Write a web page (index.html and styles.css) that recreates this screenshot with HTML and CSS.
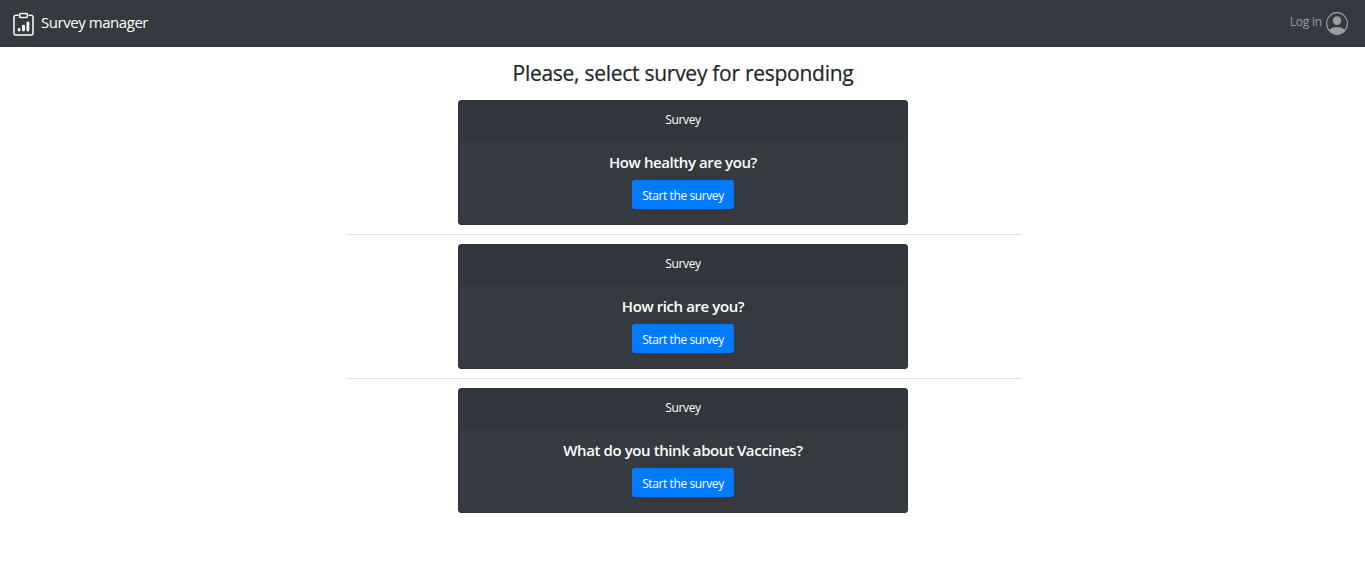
FILE: index.html
```html
<!DOCTYPE html>
<html lang="en">
<head>
<meta charset="utf-8">
<title>Survey manager</title>
<link rel="stylesheet" href="styles.css">
</head>
<body>
<nav class="navbar">
  <a class="brand">
    <svg class="brand-icon" width="21" height="24" viewBox="0 0 21 24" fill="none" stroke="#fff" stroke-width="1.5">
      <path d="M5.500 3.200H3A2 2 0 0 0 1 5.200V21A2 2 0 0 0 3 23H18A2 2 0 0 0 20 21V5.200A2 2 0 0 0 18 3.200H15.500"/>
      <rect x="6.500" y="1.500" width="8" height="4" rx="1.600"/>
      <path d="M6.100 17.500V18M10.500 14.200V18M14.900 11V18" stroke-width="2.900" stroke-linecap="round"/>
    </svg>
    <span class="brand-name">Survey manager</span>
  </a>
  <a class="login">
    <span class="login-label">Log in</span>
    <svg class="login-icon" width="22" height="23" viewBox="0 0 22 23">
      <ellipse cx="11" cy="11.500" rx="10.400" ry="10.900" fill="none" stroke="#9a9da0" stroke-width="1.100"/>
      <circle cx="11" cy="8.600" r="4.300" fill="#9a9da0"/>
      <path d="M3 18.500C4.500 15.800 7.500 14.900 11 14.900S17.500 15.800 19 18.500A10.500 10.500 0 0 1 3 18.500Z" fill="#9a9da0"/>
    </svg>
  </a>
</nav>
<main class="container">
  <h1 class="title">Please, select survey for responding</h1>
  <section class="card">
    <div class="card-header">Survey</div>
    <div class="card-body">
      <h2 class="card-title">How healthy are you?</h2>
      <a class="btn">Start the survey</a>
    </div>
  </section>
  <hr class="divider">
  <section class="card">
    <div class="card-header">Survey</div>
    <div class="card-body">
      <h2 class="card-title">How rich are you?</h2>
      <a class="btn">Start the survey</a>
    </div>
  </section>
  <hr class="divider">
  <section class="card">
    <div class="card-header">Survey</div>
    <div class="card-body">
      <h2 class="card-title">What do you think about Vaccines?</h2>
      <a class="btn">Start the survey</a>
    </div>
  </section>
</main>
</body>
</html>
```
FILE: styles.css
```css
* { box-sizing: border-box; }
body {
  margin: 0;
  background: #fff;
  color: #212529;
  font-family: "Segoe UI", "Open Sans", "Noto Sans", sans-serif;
  font-size: 12px;
  line-height: 18px;
}
.navbar {
  height: 47px;
  padding: 0 17px 0 13px;
  display: flex;
  align-items: center;
  justify-content: space-between;
  background: #343a40;
}
.brand { display: flex; align-items: center; gap: 7px; color: #fff; }
.brand-icon { margin-top: 1px; }
.brand-name { font-size: 15px; line-height: 22px; letter-spacing: -0.45px; white-space: nowrap; margin-top: -3px; }
.login { display: flex; align-items: center; gap: 4px; color: #9a9da0; }
.login-label { letter-spacing: -0.2px; margin-top: -4px; white-space: nowrap; }
.container { width: 676px; margin: 0 auto; padding: 13px 0 0 1px; }
.title {
  margin: 0 0 13px;
  font-size: 21px;
  line-height: 27px;
  font-weight: 500;
  letter-spacing: -0.27px;
  -webkit-text-stroke: 0.2px currentColor;
  text-align: center;
  white-space: nowrap;
}
.card {
  width: 450px;
  height: 125px;
  margin: 0 auto;
  border: 1px solid #30353a;
  border-radius: 3px;
  background: #343a40;
  color: #fff;
  text-align: center;
  overflow: hidden;
}
.card-header {
  height: 37px;
  padding-top: 10px;
  background: #32373d;
  border-bottom: 1px solid #2e3338;
  letter-spacing: -0.35px;
}
.card-body { padding-top: 15px; display: flex; flex-direction: column; align-items: center; }
.card-title { margin: 0 0 9px; font-size: 15px; line-height: 18px; font-weight: 600; letter-spacing: -0.41px; white-space: nowrap; }
.btn {
  width: 102px;
  height: 29px;
  padding-top: 7px;
  border-radius: 3px;
  background: #007bff;
  letter-spacing: -0.4px;
  white-space: nowrap;
}
.divider { margin: 9px 0; border: 0; border-top: 1px solid #dfdfdf; }
```
